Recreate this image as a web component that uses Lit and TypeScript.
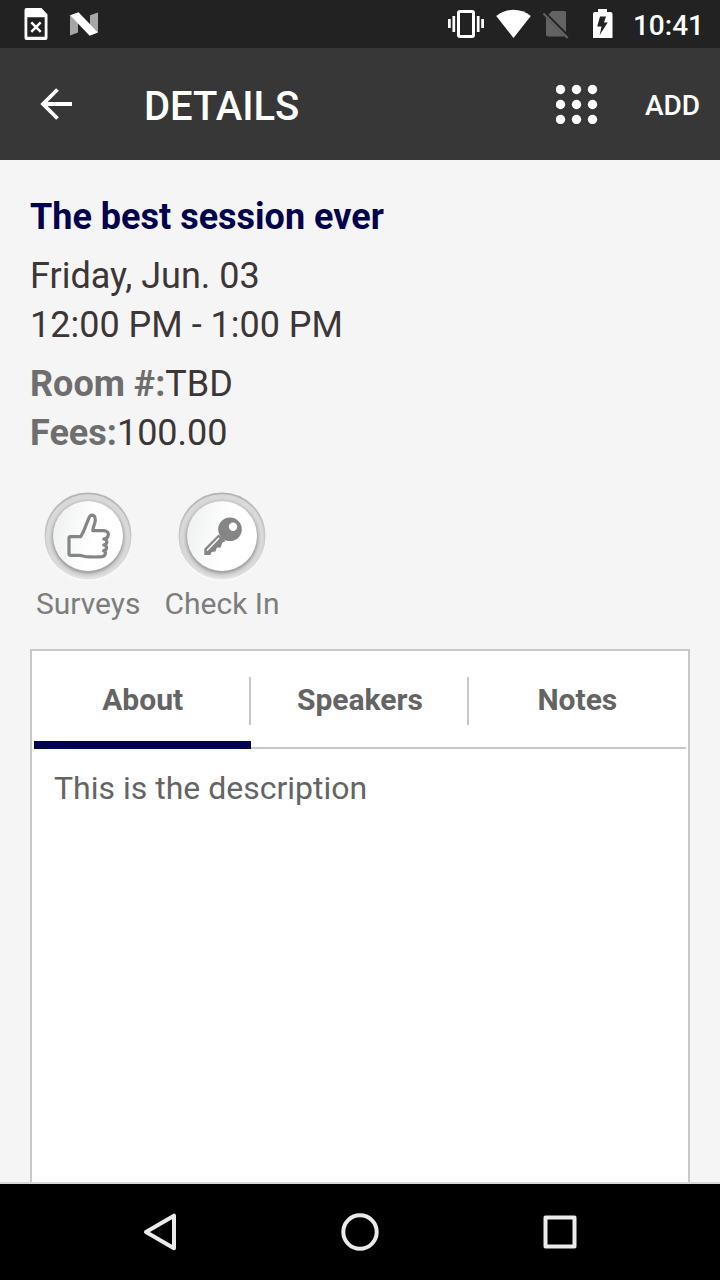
import { LitElement, html, svg, css } from "lit";
import { customElement, property, state } from "lit/decorators.js";

@customElement("status-bar")
class StatusBar extends LitElement {
  static styles = css`
    :host {
      display: flex;
      align-items: center;
      justify-content: space-between;
      height: 48px;
      padding: 0 16px 0 20px;
      background: #222222;
      color: #ffffff;
    }
    .group {
      display: flex;
      align-items: center;
    }
    .left {
      gap: 16px;
    }
    .right {
      gap: 12px;
    }
    svg {
      display: block;
    }
    .time {
      padding-top: 4px;
      font-size: 28px;
      font-weight: 500;
      line-height: 44px;
    }
  `;

  render() {
    return html`
      <div class="group left">
        <svg width="32" height="48" viewBox="20 0 32 48" aria-hidden="true">
          <path fill="#fff" fill-rule="evenodd" d="M26 8h15.500l6 6.500v23.500a2 2 0 0 1-2 2h-19a2 2 0 0 1-2-2v-28a2 2 0 0 1 1.500-2zM27.300 17.300v19.500h17.400v-19.500z" />
          <path stroke="#fff" stroke-width="2.400" d="M31.300 22.300l9.400 9.600M40.700 22.300l-9.400 9.600" />
        </svg>
        <svg width="32" height="48" viewBox="68 0 32 48" aria-hidden="true">
          <path fill="#a6a6a6" d="M70 15l8 8v9.500l-8 3zM98 12.500v20l-8-8v-9.300z" />
          <path fill="#fff" d="M70 15.300l8.500-3L98 32.500l-8.300 3.200z" />
        </svg>
      </div>
      <div class="group right">
        <svg width="36" height="48" viewBox="449 0 36 48" aria-hidden="true">
          <rect x="459.500" y="11.500" width="15" height="25" rx="1.500" fill="none" stroke="#fff" stroke-width="3" />
          <path stroke="#fff" stroke-width="2.700" d="M450.400 19v9M483.600 19v9" />
          <path stroke="#fff" stroke-width="2.700" d="M454.800 16v16M479.200 16v16" />
        </svg>
        <svg width="35" height="48" viewBox="496.500 0 35 48" aria-hidden="true">
          <path fill="#fff" d="M496.700 16c9.800-8.200 24.800-8.200 34.600 0L514 38z" />
        </svg>
        <svg width="26" height="48" viewBox="544 0 26 48" aria-hidden="true">
          <path fill="#636363" d="M553 11h12.500a1.500 1.500 0 0 1 1.500 1.500v19.500L549.500 14.500zM547 17.500L566 36.500h-17a2 2 0 0 1-2-2z" />
          <path stroke="#636363" stroke-width="2" d="M544.500 13.500l24.300 24.500" />
        </svg>
        <svg width="40" height="48" viewBox="582 0 40 48" aria-hidden="true">
          <path fill="#fff" d="M599 9h9v3h3.500a2 2 0 0 1 2 2v24h-19.500v-24a2 2 0 0 1 2-2h3z" />
          <path fill="#222" d="M601 16.500h6l-2 6h3.700l-8 12.500 1.800-8.500h-4.300z" />
        </svg>
        <span class="time">10:41</span>
      </div>
    `;
  }
}

@customElement("app-bar")
class AppBar extends LitElement {
  @property() heading = "";

  static styles = css`
    :host {
      display: flex;
      align-items: center;
      height: 112px;
      background: #373737;
      color: #ffffff;
    }
    button {
      display: flex;
      align-items: center;
      justify-content: center;
      height: 112px;
      margin: 0;
      padding: 0;
      border: 0;
      background: none;
      color: inherit;
      font: inherit;
    }
    .back {
      width: 112px;
    }
    h1 {
      flex: 1;
      margin: 0;
      padding: 6px 0 0 32px;
      font-size: 40px;
      font-weight: 500;
      line-height: 48px;
    }
    .apps {
      width: 96px;
    }
    .add {
      padding: 2px 20px 0;
      font-size: 28px;
      font-weight: 500;
    }
  `;

  render() {
    const steps = [0, 1, 2];
    return html`
      <button class="back" aria-label="Back">
        <svg width="32" height="32" viewBox="0 0 32 32" aria-hidden="true">
          <path fill="none" stroke="#fff" stroke-width="3.800" d="M32 16H3M17.500 1.500L3 16l14.500 14.500" />
        </svg>
      </button>
      <h1>${this.heading}</h1>
      <button class="apps" aria-label="Menu">
        <svg width="42" height="40" viewBox="0 0 42 40" aria-hidden="true">
          ${steps.map((r) => steps.map((c) => svg`<circle cx=${4.5 + c * 16} cy=${5.5 + r * 15} r="4.700" fill="#fff" />`))}
        </svg>
      </button>
      <button class="add">ADD</button>
    `;
  }
}

@customElement("session-actions")
class SessionActions extends LitElement {
  static styles = css`
    :host {
      display: flex;
      gap: 24px;
      padding: 0 6px;
    }
    button {
      display: flex;
      flex-direction: column;
      align-items: center;
      margin: 0;
      padding: 0;
      border: 0;
      background: none;
      color: #7d7d7d;
      font: inherit;
      font-size: 30px;
      line-height: 46px;
    }
    svg {
      display: block;
    }
  `;

  private disc(id: string) {
    return svg`
      <defs>
        <linearGradient id="${id}-rim" x1="0" y1="0" x2="0" y2="1">
          <stop offset="0" stop-color="#b4b4b4" />
          <stop offset="0.600" stop-color="#d0d0d0" />
          <stop offset="1" stop-color="#e4e4e4" />
        </linearGradient>
        <linearGradient id="${id}-face" x1="0" y1="0.300" x2="1" y2="0.500">
          <stop offset="0" stop-color="#eff1f1" />
          <stop offset="0.600" stop-color="#ffffff" />
        </linearGradient>
        <radialGradient id="${id}-shadow">
          <stop offset="0.870" stop-color="#a6a6a6" />
          <stop offset="1" stop-color="#d9d9d9" stop-opacity="0" />
        </radialGradient>
      </defs>
      <circle cx="45" cy="46" r="44" fill="#fbfbfb" />
      <circle cx="45" cy="45" r="42.700" fill="#d9d9d9" stroke="url(#${id}-rim)" stroke-width="1.800" />
      <circle cx="45" cy="46.500" r="40" fill="url(#${id}-shadow)" />
      <circle cx="45" cy="45" r="35" fill="url(#${id}-face)" />
    `;
  }

  render() {
    return html`
      <button>
        <svg width="90" height="90" viewBox="0 0 90 90" aria-hidden="true">
          ${this.disc("surveys")}
          <path fill="none" stroke="#858585" stroke-width="3.200" stroke-linejoin="round"
            d="M27.500 45.700h10c3.300-4.200 5.300-11.700 7.800-17.200.900-2.500 1.700-4.300 3.600-4.300 2.300.200 3.500 2.400 3.400 5-.200 3.800-2.300 6.500-2.500 10.500h11c3.500.200 5.300 2.500 4.300 5-.500 1.800-2 3-4.300 3.300 3.500.500 4.700 4.500 0 6 3.500.700 4 4.700-.300 5.700 3 1 2.500 5.300-1.500 6-5.500.500-11 .300-16 0-2.500-.300-4-1.400-6-1.400h-9.500c-1 0-1.500-.500-1.500-1.500v-15.600c0-1 .500-1.500 1.500-1.500z" />
        </svg>
        <span>Surveys</span>
      </button>
      <button>
        <svg width="90" height="90" viewBox="0 0 90 90" aria-hidden="true">
          ${this.disc("checkin")}
          <path fill="#858588"
            d="M41.500 43.500L27.300 57.800v6.200h6l1.200-3 4-.500 1.200-3.700 4-.300 1.500-4.700 3.500-1.800z" />
          <circle cx="53" cy="38.300" r="11.800" fill="#858588" />
          <circle cx="56" cy="35.700" r="4.200" fill="#fff" />
          <path stroke="#fff" stroke-width="1.400" d="M30 59.500L42 47" />
        </svg>
        <span>Check In</span>
      </button>
    `;
  }
}

@customElement("tab-panel")
class TabPanel extends LitElement {
  @state() private selected = 0;

  private tabs = ["About", "Speakers", "Notes"];
  private bodies = ["This is the description", "", ""];

  static styles = css`
    :host {
      display: flex;
      flex-direction: column;
      box-sizing: border-box;
      padding: 0 2px;
      border: 2px solid #c8c8c8;
      border-bottom: 0;
      background: #ffffff;
      color: #646464;
    }
    .tabs {
      display: grid;
      grid-template-columns: repeat(3, 1fr);
      height: 98px;
      background: linear-gradient(#c8c8c8, #c8c8c8) bottom / 100% 2px no-repeat;
    }
    .tab {
      margin: 0;
      padding: 6px 0 0;
      border: 0;
      border-bottom: 8px solid transparent;
      background: none;
      color: inherit;
      font: inherit;
      font-size: 30px;
      font-weight: 700;
    }
    .tab:not(:last-child) {
      background: linear-gradient(#c8c8c8, #c8c8c8) right 26px / 2px 48px no-repeat;
    }
    .tab.active {
      border-bottom-color: #00004c;
    }
    .body {
      margin: 0;
      padding: 17px 20px;
      font-size: 32px;
      line-height: 44px;
    }
  `;

  render() {
    return html`
      <div class="tabs" role="tablist">
        ${this.tabs.map(
          (name, i) => html`<button
            class="tab ${i === this.selected ? "active" : ""}"
            role="tab"
            aria-selected=${i === this.selected ? "true" : "false"}
            @click=${() => (this.selected = i)}
          >${name}</button>`
        )}
      </div>
      <p class="body" role="tabpanel">${this.bodies[this.selected]}</p>
    `;
  }
}

@customElement("nav-bar")
class NavBar extends LitElement {
  static styles = css`
    :host {
      display: flex;
      justify-content: center;
      height: 96px;
      background: #000000;
    }
    button {
      flex: 0 1 200px;
      display: flex;
      align-items: center;
      justify-content: center;
      margin: 0;
      padding: 0;
      border: 0;
      background: none;
    }
    svg {
      fill: none;
      stroke: #ebebeb;
      stroke-width: 4;
      stroke-linejoin: round;
    }
  `;

  render() {
    return html`
      <button aria-label="Back">
        <svg width="40" height="40" viewBox="0 0 40 40"><path d="M34 3.700v32.600L6 20z" /></svg>
      </button>
      <button aria-label="Home">
        <svg width="40" height="40" viewBox="0 0 40 40"><circle cx="20" cy="20" r="16.700" /></svg>
      </button>
      <button aria-label="Recent apps">
        <svg width="40" height="40" viewBox="0 0 40 40"><path d="M5.500 5.500h29v29h-29z" /></svg>
      </button>
    `;
  }
}

@customElement("app-root")
class AppRoot extends LitElement {
  static styles = css`
    :host {
      display: flex;
      flex-direction: column;
      min-height: 100vh;
      background: #f5f5f5;
      color: #3c3637;
      font-family: Roboto, sans-serif;
    }
    main {
      flex: 1;
      display: flex;
      flex-direction: column;
      padding: 33px 30px 0;
      border-bottom: 2px solid #d8d8d8;
      font-size: 36px;
      line-height: 49px;
    }
    h2,
    p {
      margin: 0 0 10px;
      font-size: inherit;
    }
    h2 {
      color: #00004c;
      font-weight: 700;
    }
    b {
      color: #6e6e6e;
    }
    session-actions {
      margin: 23px 0 22px;
    }
    tab-panel {
      flex: 1;
    }
  `;

  render() {
    return html`
      <status-bar></status-bar>
      <app-bar heading="DETAILS"></app-bar>
      <main>
        <h2>The best session ever</h2>
        <p>Friday, Jun. 03<br />12:00 PM - 1:00 PM</p>
        <p><b>Room #:</b>TBD<br /><b>Fees:</b>100.00</p>
        <session-actions></session-actions>
        <tab-panel></tab-panel>
      </main>
      <nav-bar></nav-bar>
    `;
  }
}
